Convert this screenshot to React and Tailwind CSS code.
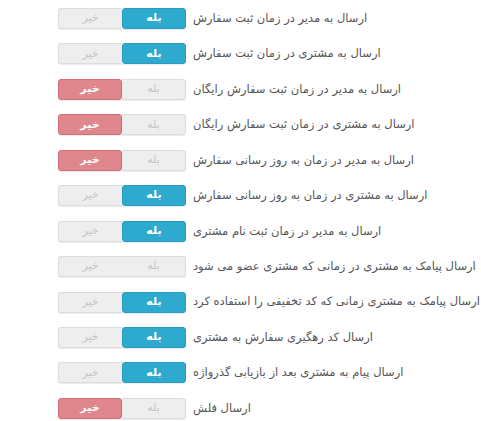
import React from "react";

const rows = [
  ["ارسال به مدیر در زمان ثبت سفارش", "on"],
  ["ارسال به مشتری در زمان ثبت سفارش", "on"],
  ["ارسال به مدیر در زمان ثبت سفارش رایگان", "off"],
  ["ارسال به مشتری در زمان ثبت سفارش رایگان", "off"],
  ["ارسال به مدیر در زمان به روز رسانی سفارش", "off"],
  ["ارسال به مشتری در زمان به روز رسانی سفارش", "on"],
  ["ارسال به مدیر در زمان ثبت نام مشتری", "on"],
  ["ارسال پیامک به مشتری در زمانی که مشتری عضو می شود", "none"],
  ["ارسال پیامک به مشتری زمانی که کد تخفیفی را استفاده کرد", "on"],
  ["ارسال کد رهگیری سفارش به مشتری", "on"],
  ["ارسال پیام به مشتری بعد از بازیابی گذرواژه", "on"],
  ["ارسال فلش", "off"],
];

const grayL =
  "flex w-[64px] items-center justify-center rounded-l-[3px] border border-r-0 border-[#dcdcdc] bg-[#eeeeee] text-[#c4c4c4]";
const grayR =
  "flex w-[64px] items-center justify-center rounded-r-[3px] border border-l-0 border-[#dcdcdc] bg-[#eeeeee] text-[#c4c4c4]";

function Toggle({ state }) {
  return (
    <div className="flex h-[21px] w-[128px] shrink-0 rounded-[3px] shadow-[0_1px_1px_rgba(0,0,0,0.08)]">
      <div
        className={
          state === "off"
            ? "flex w-[64px] items-center justify-center rounded-[3px] border border-[#cf6f78] bg-[#e0878e] font-bold text-white"
            : grayL
        }
      >
        خیر
      </div>
      <div
        className={
          state === "on"
            ? "flex w-[64px] items-center justify-center rounded-[3px] border border-[#2a9bc0] bg-[#2faacf] font-bold text-white"
            : grayR
        }
      >
        بله
      </div>
    </div>
  );
}

export default function App() {
  return (
    <div
      className="min-h-[421px] w-[481px] bg-white pl-[58px] pt-[8px] text-[11px]"
      style={{ fontFamily: '"DejaVu Sans", Tahoma, sans-serif' }}
    >
      <div className="flex flex-col gap-[14.45px]">
        {rows.map(([label, state], i) => (
          <div key={i} className="flex h-[21px] items-center gap-[7px]">
            <Toggle state={state} />
            <span dir="rtl" className="whitespace-nowrap text-[11.5px] text-[#555555]">
              {label}
            </span>
          </div>
        ))}
      </div>
    </div>
  );
}
